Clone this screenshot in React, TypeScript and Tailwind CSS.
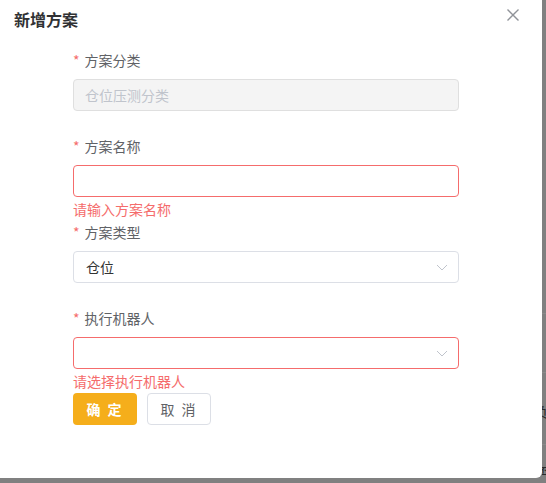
import React from 'react'

const font = { fontFamily: '"Noto Sans CJK SC", "Noto Sans", sans-serif' }

const Chevron = () => (
  <svg width="12" height="7" viewBox="0 0 12 7" fill="none">
    <path d="M1 1l5 5 5-5" stroke="#c0c4cc" strokeWidth="1" />
  </svg>
)

const Label = ({ text }: { text: string }) => (
  <div className="h-[25px] leading-[25px] mb-[6px] text-[14px] text-[#606266] flex items-center">
    <span className="text-[#f56c6c] mr-[5px] text-[14px]">*</span>
    {text}
  </div>
)

const ErrorText = ({ text }: { text: string }) => (
  <div className="h-[23px] pt-[5px] text-[14px] leading-[14px] text-[#f56c6c]">{text}</div>
)

const App = () => {
  return (
    <div className="w-[546px] h-[483px] bg-[#808080] overflow-hidden flex flex-col" style={font}>
      <div className="flex h-[478px] shrink-0">
        <div className="w-[542px] shrink-0 h-[478px] bg-white rounded-br-[6px] flex flex-col">
          {/* header */}
          <div className="h-[48px] flex justify-between pl-[14px] pr-[23px]">
            <h2 className="pt-[7px] text-[16px] leading-[24px] font-bold text-[#303133]">新增方案</h2>
            <button className="mt-[9px] w-[12px] h-[12px] flex">
              <svg width="12" height="12" viewBox="0 0 12 12">
                <path d="M0.5 0.5l11 11M11.5 0.5l-11 11" stroke="#909399" strokeWidth="1.4" />
              </svg>
            </button>
          </div>

          {/* form */}
          <div className="pl-[73px] w-[459px] flex flex-col">
            <div className="mb-[23px]">
              <Label text="方案分类" />
              <div className="h-[32px] rounded-[4px] border border-[#dfdfdf] bg-[#f4f4f4] px-[11px] flex items-center text-[14px] text-[#c0c4cc]">
                仓位压测分类
              </div>
            </div>

            <div>
              <Label text="方案名称" />
              <div className="h-[32px] rounded-[4px] border border-[#f56c6c] bg-white" />
              <ErrorText text="请输入方案名称" />
            </div>

            <div className="mb-[23px]">
              <Label text="方案类型" />
              <div className="h-[32px] rounded-[4px] border border-[#dcdfe6] bg-white pl-[12px] pr-[10px] flex items-center justify-between text-[14px] text-[#333333]">
                <span>仓位</span>
                <Chevron />
              </div>
            </div>

            <div>
              <Label text="执行机器人" />
              <div className="h-[32px] rounded-[4px] border border-[#f56c6c] bg-white pr-[10px] flex items-center justify-end">
                <Chevron />
              </div>
              <div className="h-[24px] pt-[5px] text-[14px] leading-[14px] text-[#f56c6c]">请选择执行机器人</div>
            </div>

            <div className="flex gap-[10px]">
              <button className="w-[64px] h-[32px] rounded-[4px] bg-[#f5ae1b] text-white text-[14px] font-semibold tracking-[2px]">
                确 定
              </button>
              <button className="w-[64px] h-[32px] rounded-[4px] border border-[#dcdfe6] bg-white text-[#606266] text-[14px] tracking-[2px]">
                取 消
              </button>
            </div>
          </div>
        </div>

        {/* page behind the overlay */}
        <div className="w-[4px] shrink-0 bg-[#808080] flex flex-col text-[14px] text-[#2a2a2a] overflow-hidden">
          <div className="h-[313px] shrink-0" />
          <div className="h-[59px] shrink-0 border-t border-[#8a8a8a]" />
          <div className="h-[72px] shrink-0 border-t border-[#8a8a8a] pt-[31px] leading-[14px] -ml-[8px]">负</div>
          <div className="flex-1 border-t border-[#8a8a8a] pt-[20px] leading-[14px] -ml-[6px]">否</div>
        </div>
      </div>
    </div>
  )
}

export default App
